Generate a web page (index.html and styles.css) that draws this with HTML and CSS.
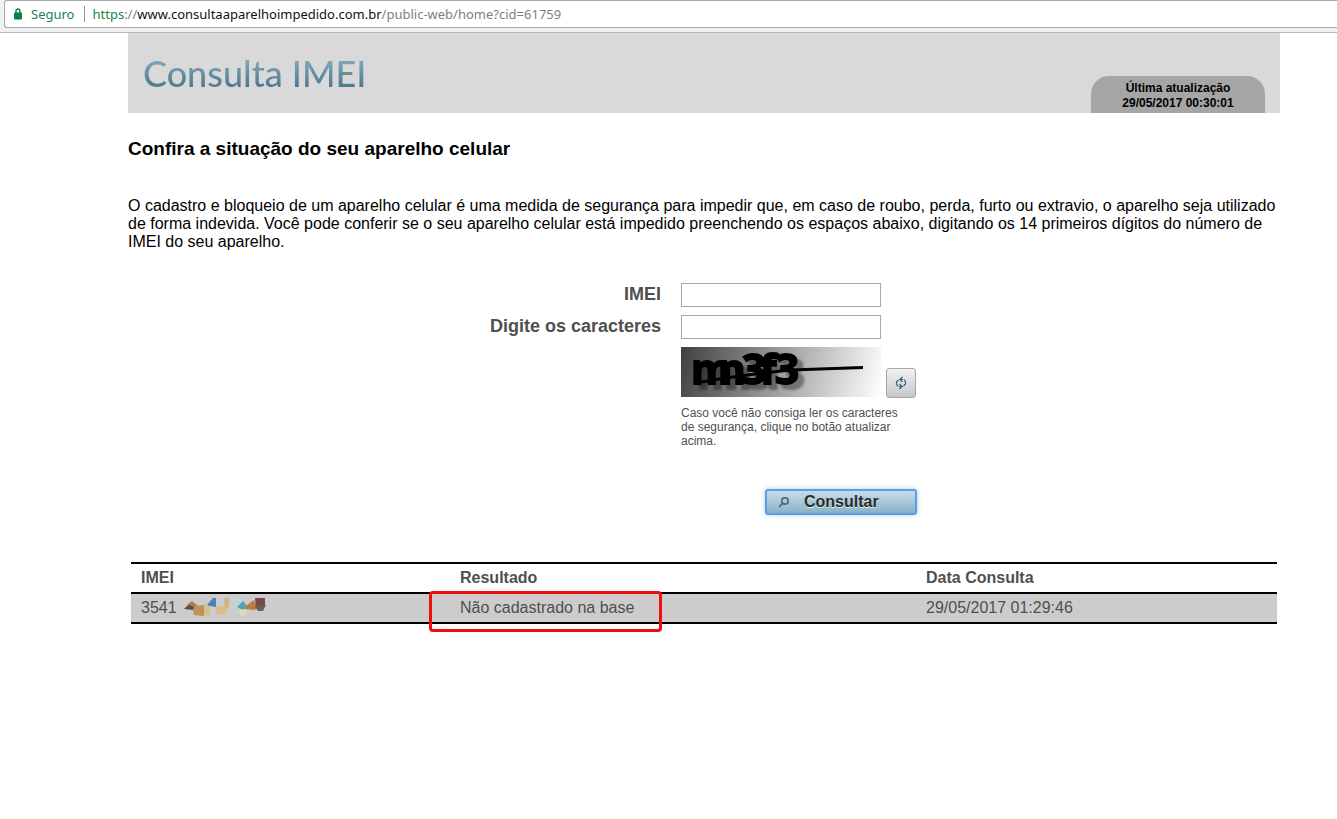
FILE: index.html
```html
<!DOCTYPE html>
<html lang="pt-BR">
<head>
<meta charset="utf-8">
<title>Consulta IMEI</title>
<link rel="stylesheet" href="styles.css">
</head>
<body>
<div class="toolbar">
  <div class="address">
    <svg class="lock" width="8" height="12" viewBox="0 0 8 12" aria-hidden="true"><path d="M2 5V3a2 2 0 0 1 4 0v2" fill="none" stroke="#0b8043" stroke-width="1.4"/><rect y="4.500" width="8" height="7" rx=".8" fill="#0b8043"/></svg>
    <span class="secure">Seguro</span>
    <span class="url"><span class="scheme">https</span>://<span class="host">www.consultaaparelhoimpedido.com.br</span>/public-web/home?cid=61759</span>
  </div>
</div>
<div class="page">
  <header class="banner">
    <div class="brand">Consulta IMEI</div>
    <div class="updated">Última atualização<br>29/05/2017 00:30:01</div>
  </header>
  <main>
    <h1 class="heading">Confira a situação do seu aparelho celular</h1>
    <p class="intro">O cadastro e bloqueio de um aparelho celular é uma medida de segurança para impedir que, em caso de roubo, perda, furto ou extravio, o aparelho seja utilizado de forma indevida. Você pode conferir se o seu aparelho celular está impedido preenchendo os espaços abaixo, digitando os 14 primeiros dígitos do número de IMEI do seu aparelho.</p>
    <form class="query">
      <label class="label" for="imei">IMEI</label>
      <input class="field" id="imei" type="text">
      <label class="label" for="chars">Digite os caracteres</label>
      <input class="field" id="chars" type="text">
      <div class="captcha">
        <svg class="challenge" width="200" height="50" viewBox="0 0 200 50" role="img" aria-label="Caracteres de segurança">
          <defs>
            <linearGradient id="fade" gradientUnits="userSpaceOnUse" x1="0" y1="0" x2="200" y2="50"><stop offset="0" stop-color="#404040"/><stop offset="1" stop-color="#fff"/></linearGradient>
          </defs>
          <rect width="200" height="50" fill="url(#fade)"/>
          <text class="glyphs" x="10 37 61 79 94" y="37">mn3f3</text>
          <path d="M20 35Q60 28 110 23L182 20.500" fill="none" stroke="#000" stroke-width="3"/>
        </svg>
        <button class="refresh" type="button" aria-label="Atualizar">
          <svg width="12" height="14" viewBox="0 0 12 14" fill="none" stroke="#35607d" stroke-width="1.200"><path d="M3 10.500 1.500 8V6L3.500 4M4 3.500h4M7.500 1 5 3.500l2.500 2.500M9 3.500 10.500 6v2L8.500 10M8 10.500H4M4.500 8 7 10.500l-2.500 2.500"/></svg>
        </button>
      </div>
      <p class="hint">Caso você não consiga ler os caracteres de segurança, clique no botão atualizar acima.</p>
      <button class="submit" type="button">
        <svg width="12" height="12" viewBox="0 0 12 12" fill="none" stroke="#3f5f70" stroke-width="1.500"><rect x="4" y="2" width="6" height="6" rx="2"/><path d="M4.500 7.500 1 11"/></svg>
        <span>Consultar</span>
      </button>
    </form>
    <table class="results">
      <thead><tr><th class="c-imei">IMEI</th><th class="c-result">Resultado</th><th>Data Consulta</th></tr></thead>
      <tbody><tr>
        <td><div class="serial">3541
          <svg width="82" height="20" viewBox="0 0 82 20" aria-hidden="true">
            <path d="M3 7 8 3l6 5-3 3-4-2Z" fill="#b07a52"/><path d="M0 11 4 7l7 2-2 3Z" fill="#50504f"/>
            <path d="m10 8 11-1-1 11-10-1-1-5Z" fill="#bf9257"/><path d="m20 7 6 1v9l-6 1Z" fill="#dcbd8c"/>
            <path d="m23 7 6-7h3v9l-6-1Z" fill="#527fb8"/><path d="m31 9 9-1V0h5v9l-5 7-7 1Z" fill="#dfbd8a"/><path d="m40 0 5 0v8l-4 3Z" fill="#ceb583"/>
            <path d="M51 0h7v4l-7 6ZM51 12l4 0-2 5Z" fill="#b8d8d8"/><path d="m53 9 6-6 5 6-5 3Z" fill="#5c9fb9"/><path d="m54 12 9-1-1 6-5 1Z" fill="#ddd8bd"/>
            <path d="m62 8 8-6 3 7-2 3-10-1Z" fill="#b87b42"/><path d="M71 0h10v7l-9 3Z" fill="#7b484d"/><path d="m71 9 5-2 6 0-3 6-5 0Z" fill="#68624d"/>
          </svg></div></td>
        <td><div class="mark">Não cadastrado na base</div></td>
        <td>29/05/2017 01:29:46</td>
      </tr></tbody>
    </table>
  </main>
</div>
</body>
</html>
```
FILE: styles.css
```css
* { box-sizing: border-box; }
body { margin: 0; background: #fff; color: #000; font: 16px/18px "Liberation Sans", Arial, sans-serif; }

.toolbar { padding-left: 4px; background: #f1f1f1; border-bottom: 1px solid #b6b6b6; height: 33px; }
.address { display: flex; align-items: center; height: 28px; padding-left: 9px; background: #fff; border: 1px solid #a9a9a9; border-right: 0; border-radius: 3px 0 0 3px; font: 13px/16px "Noto Sans", sans-serif; white-space: nowrap; }
.secure { margin-left: 9px; padding-right: 10px; border-right: 1px solid #999; color: #1b8451; }
.url { margin-left: 7px; color: #808080; }
.scheme { color: #1b8451; }
.host { color: #111; }

.page { margin: 0 57px 0 128px; padding-bottom: 48px; }
.banner { display: flex; justify-content: space-between; align-items: flex-end; height: 80px; padding: 0 15px; background: #d9d9d9; }
.brand { align-self: center; font: 500 36px/48px Lato, sans-serif; color: transparent; background: linear-gradient(#83a9bd 20%, #4c778d 80%); background-clip: text; -webkit-background-clip: text; }
.updated { width: 174px; height: 37px; padding-top: 5px; background: #a5a5a5; border-radius: 18px 18px 0 0; text-align: center; font-size: 12px; line-height: 15px; font-weight: bold; }

.heading { margin: 25px 0 0; font-size: 19px; line-height: 22px; }
.intro { margin: 37px 0 32px; }

.query { display: grid; grid-template-columns: 533px 236px; column-gap: 20px; row-gap: 8px; }
.label { text-align: right; font-size: 18px; line-height: 22px; font-weight: bold; color: #4f4f4f; }
.field { width: 200px; height: 24px; padding: 2px 4px; border: 1px solid #a8a8a8; background: #fff; font: inherit; }
.captcha { grid-column: 2; display: flex; align-items: flex-end; gap: 5px; }
.challenge { display: block; overflow: visible; }
.glyphs { font: bold 42px "Open Sans", sans-serif; stroke: #000; stroke-width: 2px; filter: drop-shadow(6px 5px 1px #00000059); }
.refresh { display: flex; align-items: center; justify-content: center; width: 30px; height: 30px; margin-bottom: -1px; padding: 0; border: 1px solid #a8a8a8; border-radius: 3px; background: linear-gradient(#f2f2f2, #c8c8c8); }
.hint { grid-column: 2; width: 228px; margin: 0; padding-top: 1px; font-size: 12px; line-height: 14px; color: #4f4f4f; }
.submit { grid-column: 2; justify-self: end; display: flex; align-items: center; gap: 14px; width: 152px; height: 26px; margin-top: 33px; padding: 0 11px; border: 2px solid #5e9bea; border-radius: 3px; background: linear-gradient(#c6dee8, #88b1c6); box-shadow: 0 0 5px #a9ccdf; color: #2b2b2b; font: bold 16px/20px "Liberation Sans", Arial, sans-serif; text-shadow: 0 1px 0 #ffffffb3; }

.results { width: 1146px; max-width: 100%; margin: 47px 0 0 3px; border-collapse: separate; border-spacing: 0; table-layout: fixed; color: #4f4f4f; text-align: left; }
.results th, .results td { height: 30px; padding: 0 10px; }
.results th { border-top: 2px solid #000; }
.results td { height: 32px; border-top: 2px solid #000; border-bottom: 2px solid #000; background: #ccc; }
.c-imei { width: 319px; }
.c-result { width: 466px; }
.serial { display: flex; align-items: center; gap: 7px; height: 20px; }
.mark { position: relative; width: max-content; }
.mark::after { content: ""; position: absolute; z-index: 1; inset: -8px -28px -15px -31px; border: 3px solid #f00d0d; border-radius: 4px; }
```
